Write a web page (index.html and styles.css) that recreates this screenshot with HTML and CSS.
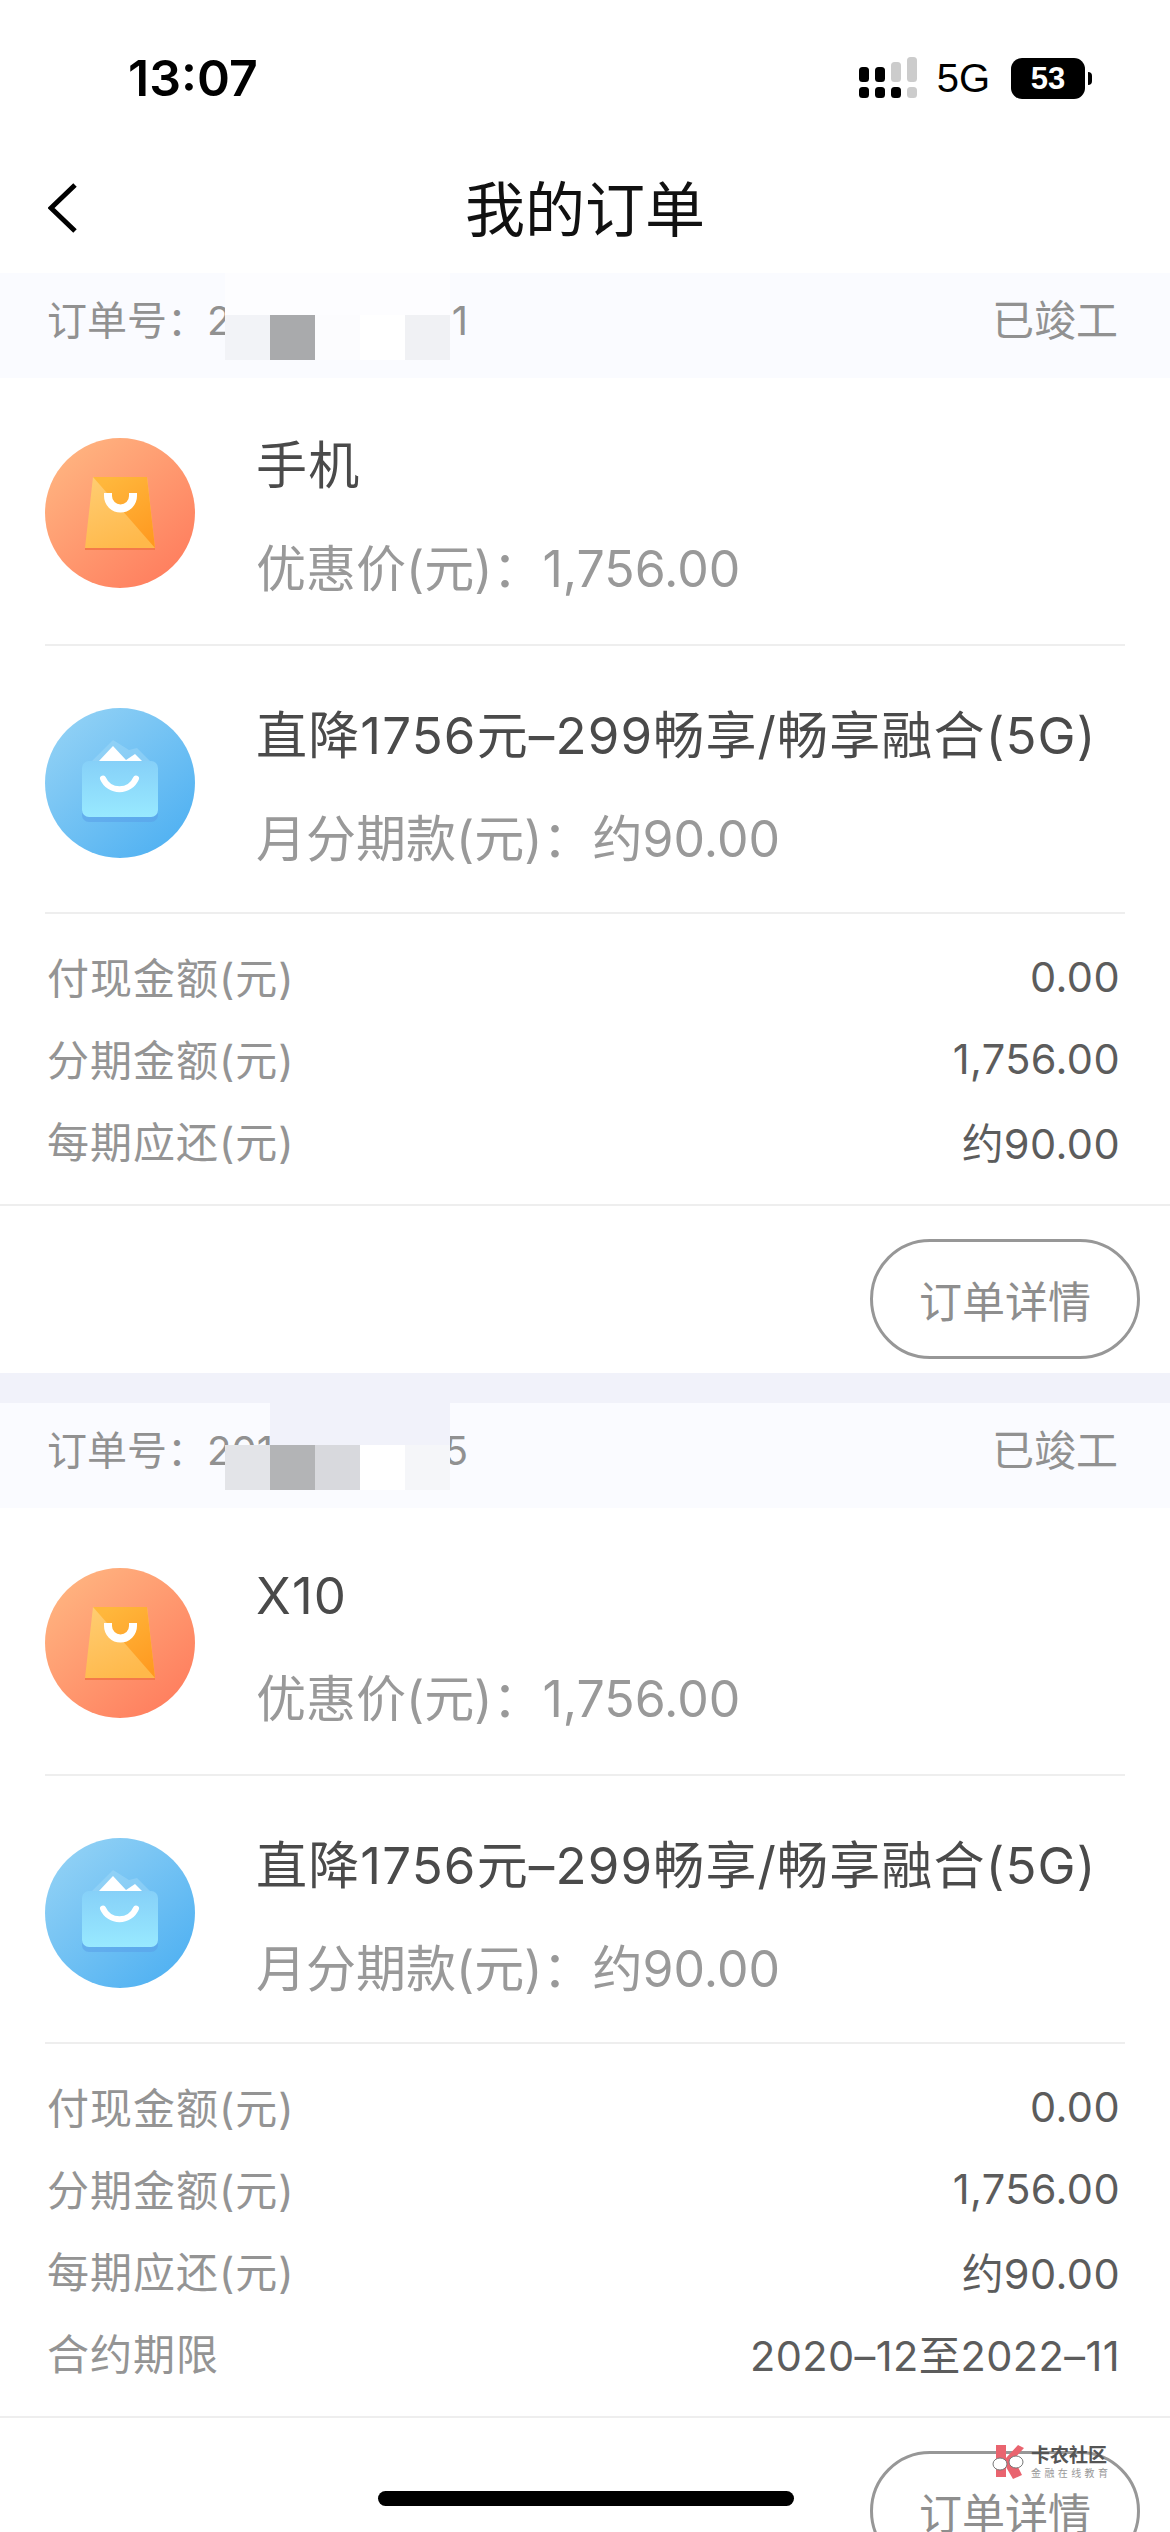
FILE: index.html
```html
<!DOCTYPE html>
<html lang="zh-CN">
<head>
    <meta charset="UTF-8">
    <meta name="viewport" content="width=device-width, initial-scale=1.0">
    <title>我的订单</title>
    <link rel="stylesheet" href="styles.css">
</head>
<body>

<!-- Icon definitions -->
<svg class="defs" width="0" height="0" aria-hidden="true">
    <defs>
        <linearGradient id="orangeBg" x1="0.15" y1="0.1" x2="0.85" y2="0.9">
            <stop offset="0" stop-color="#ffb27f"/>
            <stop offset="1" stop-color="#ff7f5f"/>
        </linearGradient>
        <linearGradient id="orangeBag" x1="0.2" y1="0" x2="0.6" y2="1">
            <stop offset="0" stop-color="#ffcc70"/>
            <stop offset="1" stop-color="#ffb84a"/>
        </linearGradient>
        <linearGradient id="orangeFold" x1="0.3" y1="0" x2="0.9" y2="1">
            <stop offset="0" stop-color="#ffb73c"/>
            <stop offset="1" stop-color="#ff981f"/>
        </linearGradient>
        <linearGradient id="blueBg" x1="0.15" y1="0.1" x2="0.85" y2="0.9">
            <stop offset="0" stop-color="#8fd0f5"/>
            <stop offset="1" stop-color="#52b2f2"/>
        </linearGradient>
        <linearGradient id="blueBag" x1="0" y1="0" x2="0" y2="1">
            <stop offset="0" stop-color="#86d0f8"/>
            <stop offset="1" stop-color="#98e9ff"/>
        </linearGradient>
        <symbol id="iconPhone" viewBox="0 0 150 150">
            <circle cx="75" cy="75" r="75" fill="url(#orangeBg)"/>
            <path d="M40 112H110V110H40Z" fill="#f4794a"/>
            <path d="M48 39H102L110 110H40Z" fill="url(#orangeBag)"/>
            <path d="M48 39H102L110 110Z" fill="url(#orangeFold)"/>
            <path d="M63 55v3a12.5 12.5 0 0 0 25 0v-3" fill="none" stroke="#fff" stroke-width="8"/>
        </symbol>
        <symbol id="iconPlan" viewBox="0 0 150 150">
            <circle cx="75" cy="75" r="75" fill="url(#blueBg)"/>
            <path d="M46 54L68 32L84 42L92 40L106 54Z" fill="#a5dcf8" opacity="0.45"/>
            <path d="M53 54L68 38L81 52L90 46L98 54Z" fill="#fff"/>
            <rect x="37" y="57" width="76" height="57" rx="7" fill="#5a9fe8" opacity="0.55"/>
            <rect x="37" y="53" width="76" height="56" rx="7" fill="url(#blueBag)"/>
            <path d="M58 70.5a18 18 0 0 0 33 0" fill="none" stroke="#fff" stroke-width="6" stroke-linecap="round"/>
        </symbol>
    </defs>
</svg>

<!-- Status bar -->
<div class="status-bar">
    <span class="time">13:07</span>
    <div class="status-right">
        <svg class="signal" width="60" height="42" viewBox="0 0 60 42">
            <rect x="1" y="10" width="10" height="15" rx="3.5" fill="#000"/>
            <rect x="17" y="10" width="10" height="15" rx="3.5" fill="#000"/>
            <rect x="33" y="5" width="10" height="20" rx="3.5" fill="#ccc"/>
            <rect x="49" y="0" width="10" height="25" rx="3.5" fill="#ccc"/>
            <rect x="1" y="30" width="10" height="11" rx="3.5" fill="#000"/>
            <rect x="17" y="30" width="10" height="11" rx="3.5" fill="#000"/>
            <rect x="33" y="30" width="10" height="11" rx="3.5" fill="#000"/>
            <rect x="49" y="30" width="10" height="11" rx="3.5" fill="#ccc"/>
        </svg>
        <span class="network">5G</span>
        <div class="battery">53</div>
    </div>
</div>

<!-- Navigation Bar -->
<header class="nav-bar">
    <svg class="back" width="30" height="50" viewBox="0 0 30 50">
        <path d="M27 2L3 25L27 48" fill="none" stroke="#000" stroke-width="5"/>
    </svg>
    <h1>我的订单</h1>
</header>

<div class="order">
    <div class="order-head">
        <span class="order-no"><span>订单号：2</span><span>1</span></span>
        <span class="order-state">已竣工</span>
        <div class="mask mask-first">
            <i class="m1"></i><i class="m2"></i><i class="m3"></i><i class="m4"></i><i class="m5"></i>
        </div>
    </div>
    <div class="product">
        <svg class="product-icon"><use href="#iconPhone"/></svg>
        <div class="product-text">
            <div class="product-name">手机</div>
            <div class="product-sub">优惠价(元)：1,756.00</div>
        </div>
    </div>
    <div class="product">
        <svg class="product-icon"><use href="#iconPlan"/></svg>
        <div class="product-text">
            <div class="product-name">直降1756元–299畅享/畅享融合(5G)</div>
            <div class="product-sub">月分期款(元)：约90.00</div>
        </div>
    </div>
    <div class="summary">
        <div class="summary-row"><span>付现金额(元)</span><span>0.00</span></div>
        <div class="summary-row"><span>分期金额(元)</span><span>1,756.00</span></div>
        <div class="summary-row"><span>每期应还(元)</span><span>约90.00</span></div>
    </div>
    <div class="order-actions"><a class="detail-btn">订单详情</a></div>
</div>

<div class="order">
    <div class="order-head">
        <span class="order-no"><span>订单号：201</span><span>5</span></span>
        <span class="order-state">已竣工</span>
        <div class="mask mask-second">
            <i class="m1"></i><i class="m2"></i><i class="m3"></i><i class="m4"></i><i class="m5"></i>
        </div>
    </div>
    <div class="product">
        <svg class="product-icon"><use href="#iconPhone"/></svg>
        <div class="product-text">
            <div class="product-name">X10</div>
            <div class="product-sub">优惠价(元)：1,756.00</div>
        </div>
    </div>
    <div class="product">
        <svg class="product-icon"><use href="#iconPlan"/></svg>
        <div class="product-text">
            <div class="product-name">直降1756元–299畅享/畅享融合(5G)</div>
            <div class="product-sub">月分期款(元)：约90.00</div>
        </div>
    </div>
    <div class="summary">
        <div class="summary-row"><span>付现金额(元)</span><span>0.00</span></div>
        <div class="summary-row"><span>分期金额(元)</span><span>1,756.00</span></div>
        <div class="summary-row"><span>每期应还(元)</span><span>约90.00</span></div>
        <div class="summary-row"><span>合约期限</span><span>2020–12至2022–11</span></div>
    </div>
    <div class="order-actions"><a class="detail-btn">订单详情</a></div>
</div>

<!-- Watermark and home indicator sit over the page -->
<div class="watermark">
    <svg width="32" height="34" viewBox="0 0 32 34">
        <path d="M4 0H14V13L26 0L32 3L22 14L30 30L21 34L14 22V32H4Z" fill="#e9646f"/>
        <ellipse cx="8" cy="19" rx="7" ry="6" fill="#fff" stroke="#777" stroke-width="1"/>
        <ellipse cx="24" cy="17" rx="7" ry="6" fill="#fff" stroke="#777" stroke-width="1"/>
    </svg>
    <div class="watermark-text">
        <div class="watermark-name">卡农社区</div>
        <div class="watermark-sub">金融在线教育</div>
    </div>
</div>
<div class="home-indicator"></div>

</body>
</html>
```

FILE: styles.css
```css
/* General styles */
html, body {
    height: 2532px;
    overflow: hidden;
}

body {
    position: relative;
    margin: 0;
    padding: 0;
    background-color: #fff;
    font-family: Inter, "Noto Sans CJK SC", sans-serif;
}

.defs {
    position: absolute;
}

/* Status bar */
.status-bar {
    height: 155px;
    box-sizing: border-box;
    padding: 57px 85px 0 128px;
    display: flex;
    justify-content: space-between;
    align-items: flex-start;
}

.time {
    font-size: 50px;
    font-weight: 600;
    line-height: 42px;
    color: #000;
}

.status-right {
    display: flex;
    align-items: center;
    gap: 19px;
}

.network {
    font-family: "Liberation Sans", sans-serif;
    font-size: 40px;
    line-height: 42px;
    color: #000;
}

.battery {
    position: relative;
    width: 74px;
    height: 41px;
    margin-left: 2px;
    border-radius: 11px;
    background-color: #000;
    color: #fff;
    font-family: "Liberation Sans", sans-serif;
    font-size: 31px;
    font-weight: bold;
    line-height: 41px;
    text-align: center;
}

.battery::after {
    content: "";
    position: absolute;
    right: -7px;
    top: 14px;
    width: 4px;
    height: 13px;
    border-radius: 0 6px 6px 0;
    background-color: #000;
}

/* Navigation bar */
.nav-bar {
    position: relative;
    height: 118px;
    box-sizing: border-box;
    padding-bottom: 18px;
    display: flex;
    align-items: center;
    justify-content: center;
}

.nav-bar h1 {
    margin: 0;
    font-size: 60px;
    font-weight: normal;
    color: #111;
}

.back {
    position: absolute;
    left: 48px;
    top: 28px;
}

/* Order card */
.order {
    height: 1100px;
    background-color: #fff;
}

.order + .order {
    border-top: 30px solid #f1f2fa;
}

.order-head {
    position: relative;
    height: 105px;
    box-sizing: border-box;
    padding: 0 52px 16px 47px;
    display: flex;
    justify-content: space-between;
    align-items: center;
    background-color: #fafbff;
    color: #919191;
}

.order-no {
    width: 421px;
    display: flex;
    justify-content: space-between;
    align-items: baseline;
    font-size: 40px;
}

.order-state {
    font-size: 42px;
}

/* Redacted part of the order number */
.mask {
    position: absolute;
    left: 225px;
    top: 0;
    width: 225px;
    height: 87px;
    display: flex;
    align-items: flex-end;
}

.mask i {
    width: 45px;
    height: 45px;
}

.mask-first {
    background-color: #fdfdff;
}

.mask-first .m1 { background-color: #f2f3f7; }
.mask-first .m2 { background-color: #a9aaac; }
.mask-first .m3 { background-color: #fcfcfe; }
.mask-first .m4 { background-color: #fff; }
.mask-first .m5 { background-color: #f0f1f4; }

.mask-second {
    background: linear-gradient(to right, transparent 45px, #f1f2fa 45px);
}

.mask-second .m1 { background-color: #e3e4e8; }
.mask-second .m2 { background-color: #b3b4b6; }
.mask-second .m3 { background-color: #d8d9dd; }
.mask-second .m4 { background-color: #fff; }
.mask-second .m5 { background-color: #f5f6f9; }

/* Product rows */
.product {
    height: 268px;
    box-sizing: border-box;
    margin: 0 45px;
    padding-top: 4px;
    display: flex;
    align-items: center;
    gap: 61px;
    border-bottom: 2px solid #eeeeee;
}

.product + .product {
    padding-top: 8px;
}

.product-icon {
    width: 150px;
    height: 150px;
    flex-shrink: 0;
}

.product-text {
    display: flex;
    flex-direction: column;
    gap: 43px;
    padding-top: 8px;
}

.product-name {
    font-size: 51px;
    line-height: 60px;
    letter-spacing: 1.15px;
    color: #4a4a4a;
    white-space: nowrap;
}

.product-sub {
    font-size: 50px;
    line-height: 60px;
    color: #999;
    white-space: nowrap;
}

/* Amount rows */
.summary {
    padding: 20px 50px 24px 47px;
    border-bottom: 2px solid #eeeeee;
}

.summary-row {
    height: 82px;
    display: flex;
    justify-content: space-between;
    align-items: center;
    font-size: 42px;
    letter-spacing: 1px;
    color: #949494;
}

.summary-row span:last-child {
    padding-top: 4px;
    font-size: 41.5px;
    letter-spacing: 0.4px;
    color: #5c5c5c;
}

/* Button row */
.order-actions {
    display: flex;
    justify-content: flex-end;
    padding: 33px 30px 0 0;
}

.detail-btn {
    width: 264px;
    height: 114px;
    border: 3px solid #979797;
    border-radius: 60px;
    display: flex;
    align-items: center;
    justify-content: center;
    font-size: 43px;
    color: #8e8e8e;
}

/* Overlays */
.watermark {
    position: absolute;
    left: 992px;
    top: 2445px;
    display: flex;
    gap: 7px;
}

.watermark-name {
    font-size: 19px;
    font-weight: bold;
    line-height: 22px;
    color: #555;
}

.watermark-sub {
    font-size: 10px;
    line-height: 13px;
    letter-spacing: 3.4px;
    color: #999;
}

.home-indicator {
    position: absolute;
    left: 378px;
    top: 2491px;
    width: 416px;
    height: 15px;
    border-radius: 8px;
    background-color: #000;
}
```
